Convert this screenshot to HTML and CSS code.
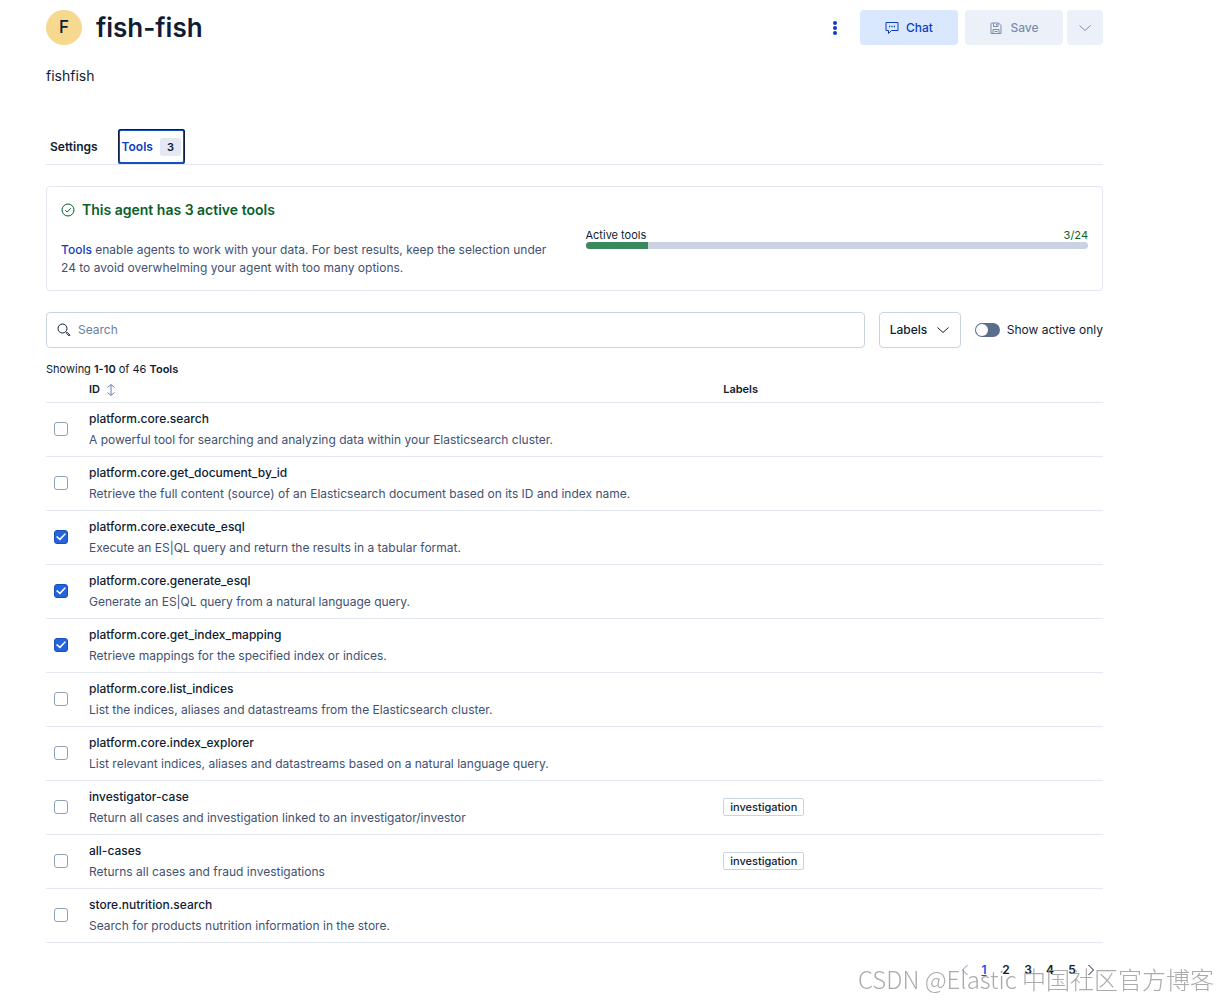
FILE: index.html
```html
<!DOCTYPE html>
<html lang="en">
<head>
  <meta charset="UTF-8" />
  <meta name="viewport" content="width=device-width, initial-scale=1.0" />
  <title>fish-fish</title>
  <link rel="stylesheet" href="styles.css">
</head>
<body>
<main class="page">
  <header class="page-header">
    <span class="avatar">F</span>
    <h1>fish-fish</h1>
    <div class="actions">
      <button class="btn-more" aria-label="More actions">
        <svg width="6" height="16" viewBox="0 0 6 16"><circle cx="3" cy="3" r="2"/><circle cx="3" cy="8" r="2"/><circle cx="3" cy="13" r="2"/></svg>
      </button>
      <button class="btn btn-chat">
        <svg class="icon" width="14" height="14" viewBox="0 0 14 14"><path d="M1 1.5h12v8H6.5L3.5 12.5v-3H1z"/><path d="M4 5.5h1.2M6.4 5.5h1.2M8.8 5.5h1.2" stroke-width="1.4"/></svg>
        Chat
      </button>
      <button class="btn btn-save" disabled>
        <svg class="icon" width="14" height="14" viewBox="0 0 14 14"><path d="M2.5 2h7l2.500 2.500v8h-10v-10z"/><path d="M4.500 2v3.500h4.500V2M7.500 3v1.500M4 12.500v-4h6v4M5.500 10.500h3"/></svg>
        Save
      </button>
      <button class="btn btn-menu" disabled aria-label="Save options">
        <svg class="icon" width="14" height="14" viewBox="0 0 14 14"><path d="M1.500 4.500l5.500 5 5.500-5"/></svg>
      </button>
    </div>
  </header>

  <p class="description">fishfish</p>

  <nav class="tabs" role="tablist">
    <button class="tab" role="tab" aria-selected="false">Settings</button>
    <button class="tab tab-active" role="tab" aria-selected="true">Tools <span class="count">3</span></button>
  </nav>

  <section class="panel">
    <div class="panel-info">
      <h2>
        <svg class="icon" width="14" height="14" viewBox="0 0 14 14"><circle cx="7" cy="7" r="6"/><path d="M4.300 7.200l1.900 1.900 3.700-3.900"/></svg>
        This agent has 3 active tools
      </h2>
      <p><a href="#">Tools</a> enable agents to work with your data. For best results, keep the selection under 24 to avoid overwhelming your agent with too many options.</p>
    </div>
    <div class="usage">
      <div class="usage-text"><span>Active tools</span><span class="usage-value">3/24</span></div>
      <div class="bar"><div class="bar-fill" style="width: 12.5%"></div></div>
    </div>
  </section>

  <div class="filters">
    <label class="search">
      <svg class="icon" width="14" height="14" viewBox="0 0 14 14"><circle cx="5.500" cy="5.500" r="4.500"/><path d="M8.800 8.800l.8.800M9.500 10.300l.8-.8 2.700 2.700-.8.8z"/></svg>
      <input type="search" placeholder="Search" aria-label="Search" />
    </label>
    <div class="labels-filter">
      <select aria-label="Labels">
        <option>Labels</option>
        <option>investigation</option>
      </select>
      <svg class="icon" width="14" height="14" viewBox="0 0 14 14"><path d="M1.500 4.500l5.500 5 5.500-5"/></svg>
    </div>
    <label class="switch"><input type="checkbox" role="switch" /> Show active only</label>
  </div>

  <p class="summary">Showing <b>1-10</b> of 46 <b>Tools</b></p>

  <table class="tools">
    <thead>
      <tr>
        <th class="col-check"></th>
        <th class="col-id">ID <svg class="icon sort" width="10" height="14" viewBox="0 0 10 14"><path d="M5 2v10M1.500 4.500L5 1.500l3.500 3M1.500 9.500L5 12.500l3.500-3"/></svg></th>
        <th>Labels</th>
      </tr>
    </thead>
    <tbody id="toolRows"></tbody>
  </table>

  <nav class="pagination" aria-label="Pages">
    <button aria-label="Previous page" disabled><svg class="icon" width="8" height="14" viewBox="0 0 8 14"><path d="M6.500 2L1.500 7l5 5"/></svg></button>
    <a href="#" class="current">1</a>
    <a href="#">2</a>
    <a href="#">3</a>
    <a href="#">4</a>
    <a href="#">5</a>
    <button aria-label="Next page"><svg class="icon" width="8" height="14" viewBox="0 0 8 14"><path d="M1.500 2l5 5-5 5"/></svg></button>
  </nav>
</main>
<div class="watermark">CSDN @Elastic 中国社区官方博客</div>

<script src="script.js"></script>
</body>
</html>
```
FILE: styles.css
```css
* {
  box-sizing: border-box;
}
body {
  margin: 0;
  font-family: Inter, "Noto Sans CJK SC", sans-serif;
  font-size: 12px;
  line-height: 18px;
  color: #101c33;
  background: #fff;
}
button, input, select {
  font: inherit;
  color: inherit;
  margin: 0;
}
button {
  padding: 0;
  border: none;
  background: none;
  cursor: pointer;
}
h1, h2, p {
  margin: 0;
}
a {
  color: #0b3fbf;
  text-decoration: none;
}
.icon {
  fill: none;
  stroke: currentColor;
  flex-shrink: 0;
}
.page {
  padding: 10px 115px 0 46px;
}

/* header */
.page-header {
  display: flex;
  align-items: center;
  gap: 14px;
}
.avatar {
  width: 36px;
  height: 35px;
  border-radius: 50%;
  background: #f6d98e;
  font-size: 17px;
  font-weight: 500;
  line-height: 35px;
  text-align: center;
}
h1 {
  font-size: 26px;
  font-weight: 600;
  line-height: 35px;
}
.actions {
  display: flex;
  margin-left: auto;
}
.btn-more {
  width: 20px;
  margin-right: 15px;
  fill: #0b3fbf;
}
.btn-more svg {
  display: block;
  margin: auto;
}
.btn {
  display: flex;
  align-items: center;
  justify-content: center;
  gap: 7px;
  width: 98px;
  height: 35px;
  border-radius: 4px;
  font-weight: 500;
}
.btn-chat {
  background: #d9e8ff;
  color: #0b3fbf;
  margin-right: 7px;
}
.btn-save, .btn-menu {
  background: #ecf1f9;
  color: #798eaf;
}
.btn-menu {
  width: 36px;
  margin-left: 4px;
}
.description {
  margin-top: 22px;
  font-size: 14px;
}

/* tabs */
.tabs {
  display: flex;
  gap: 16px;
  margin-top: 44px;
  border-bottom: 1px solid #e3e8f2;
}
.tab {
  display: flex;
  align-items: center;
  gap: 7px;
  height: 35px;
  padding: 0 4px;
  font-weight: 600;
}
.tab-active {
  color: #0b3fbf;
  border-radius: 3px;
  box-shadow: inset 0 -2px #1750ba, inset 0 0 0 1px #101c3f, inset 0 0 0 2px #1750ba;
}
.count {
  padding: 0 7px;
  border-radius: 3px;
  background: #e3e8f2;
  color: #101c33;
  font-size: 11px;
}

/* active tools panel */
.panel {
  display: flex;
  align-items: center;
  gap: 22px;
  margin-top: 21px;
  padding: 13px 14px;
  border: 1px solid #e3e8f2;
  border-radius: 4px;
}
.panel > div {
  flex: 1;
}
h2 {
  display: flex;
  align-items: center;
  gap: 7px;
  margin-bottom: 22px;
  color: #09602d;
  font-size: 14px;
  font-weight: 600;
  line-height: 19px;
}
.panel-info p {
  color: #3f5172;
}
.panel-info a {
  font-weight: 500;
}
.usage-text {
  display: flex;
  justify-content: space-between;
  font-size: 11px;
  line-height: 14px;
}
.usage-value {
  color: #09602d;
}
.bar {
  height: 7px;
  border-radius: 4px;
  background: #cad3e2;
  overflow: hidden;
}
.bar-fill {
  height: 100%;
  background: #3b875e;
}

/* filters */
.filters {
  display: flex;
  align-items: center;
  gap: 14px;
  margin-top: 21px;
}
.search {
  display: flex;
  align-items: center;
  flex: 1;
  gap: 7px;
  height: 36px;
  padding: 0 10px;
  border: 1px solid #cad3e2;
  border-radius: 4px;
}
.search input {
  flex: 1;
  padding: 0;
  border: none;
  outline: none;
  background: none;
}
.search input::placeholder {
  color: #69809f;
}
.labels-filter {
  display: grid;
  align-items: center;
}
.labels-filter > * {
  grid-area: 1 / 1;
}
.labels-filter select {
  width: 82px;
  height: 36px;
  padding: 0 10px;
  border: 1px solid #cad3e2;
  border-radius: 4px;
  appearance: none;
  background: #fff;
  font-weight: 500;
}
.labels-filter .icon {
  justify-self: end;
  margin-right: 11px;
  pointer-events: none;
}
.switch {
  display: flex;
  align-items: center;
  gap: 7px;
}
.switch input {
  appearance: none;
  width: 25px;
  height: 14px;
  border-radius: 7px;
  background: #5a6d8c;
}
.switch input::before {
  content: "";
  display: block;
  width: 12px;
  height: 12px;
  margin: 1px;
  border-radius: 50%;
  background: #fff;
}
.switch input:checked::before {
  margin-left: 12px;
}

/* table */
.summary {
  margin-top: 12px;
  font-size: 11px;
}
.summary b {
  font-weight: 600;
}
.tools {
  width: 100%;
  border-collapse: collapse;
  table-layout: fixed;
}
.tools th {
  height: 24px;
  padding: 0;
  border-bottom: 1px solid #e3e8f2;
  font-size: 11px;
  font-weight: 600;
  text-align: left;
  vertical-align: top;
  line-height: 22px;
}
.col-check {
  width: 43px;
}
.col-id {
  width: 60%;
}
.sort {
  margin-left: 3px;
  color: #69809f;
  vertical-align: middle;
}
.tools td {
  height: 54px;
  padding: 0;
  border-bottom: 1px solid #e3e8f2;
}
.tool-name {
  font-weight: 500;
  line-height: 21px;
}
.tool-text {
  color: #3f5172;
  line-height: 21px;
}
.tools input {
  display: grid;
  place-items: center;
  appearance: none;
  width: 14px;
  height: 14px;
  margin-left: 8px;
  border: 1px solid #8e9fbc;
  border-radius: 3px;
}
.tools input:checked {
  border-color: #1750ba;
  background: #2563da;
}
.tools input:checked::before {
  content: "";
  width: 10px;
  height: 8px;
  background: #fff;
  clip-path: polygon(0 50%, 12% 36%, 38% 66%, 88% 2%, 100% 14%, 40% 94%);
}
.label {
  display: inline-block;
  padding: 0 6px;
  border: 1px solid #cad3e2;
  border-radius: 2px;
  font-size: 11px;
  font-weight: 500;
  line-height: 16px;
  vertical-align: middle;
}

/* pagination */
.pagination {
  display: flex;
  justify-content: flex-end;
  margin-top: 18px;
  padding-right: 4px;
}
.pagination > * {
  display: flex;
  align-items: center;
  justify-content: center;
  width: 22px;
  height: 18px;
  color: #101c33;
  font-size: 12px;
  font-weight: 600;
}
.pagination > button {
  width: 16px;
}
.pagination > button:disabled {
  color: #798eaf;
}
.pagination > .current {
  color: #1750ea;
  text-decoration: underline;
}
.watermark {
  position: fixed;
  right: 4px;
  bottom: 6px;
  color: rgba(150, 150, 150, 0.8);
  font-family: "Noto Sans CJK SC", sans-serif;
  font-size: 24px;
  font-weight: 300;
  line-height: 30px;
  white-space: nowrap;
  pointer-events: none;
}
```
FILE: script.js
```js
const tools = [
  { id: "platform.core.search", text: "A powerful tool for searching and analyzing data within your Elasticsearch cluster." },
  { id: "platform.core.get_document_by_id", text: "Retrieve the full content (source) of an Elasticsearch document based on its ID and index name." },
  { id: "platform.core.execute_esql", text: "Execute an ES|QL query and return the results in a tabular format.", active: true },
  { id: "platform.core.generate_esql", text: "Generate an ES|QL query from a natural language query.", active: true },
  { id: "platform.core.get_index_mapping", text: "Retrieve mappings for the specified index or indices.", active: true },
  { id: "platform.core.list_indices", text: "List the indices, aliases and datastreams from the Elasticsearch cluster." },
  { id: "platform.core.index_explorer", text: "List relevant indices, aliases and datastreams based on a natural language query." },
  { id: "investigator-case", text: "Return all cases and investigation linked to an investigator/investor", label: "investigation" },
  { id: "all-cases", text: "Returns all cases and fraud investigations", label: "investigation" },
  { id: "store.nutrition.search", text: "Search for products nutrition information in the store." }
];

document.getElementById("toolRows").innerHTML = tools.map(t => `
  <tr>
    <td><input type="checkbox" id="${t.id}" ${t.active ? "checked" : ""} /></td>
    <td>
      <div class="tool-name"><label for="${t.id}">${t.id}</label></div>
      <div class="tool-text">${t.text}</div>
    </td>
    <td>${t.label ? `<span class="label">${t.label}</span>` : ""}</td>
  </tr>`).join("");
```
